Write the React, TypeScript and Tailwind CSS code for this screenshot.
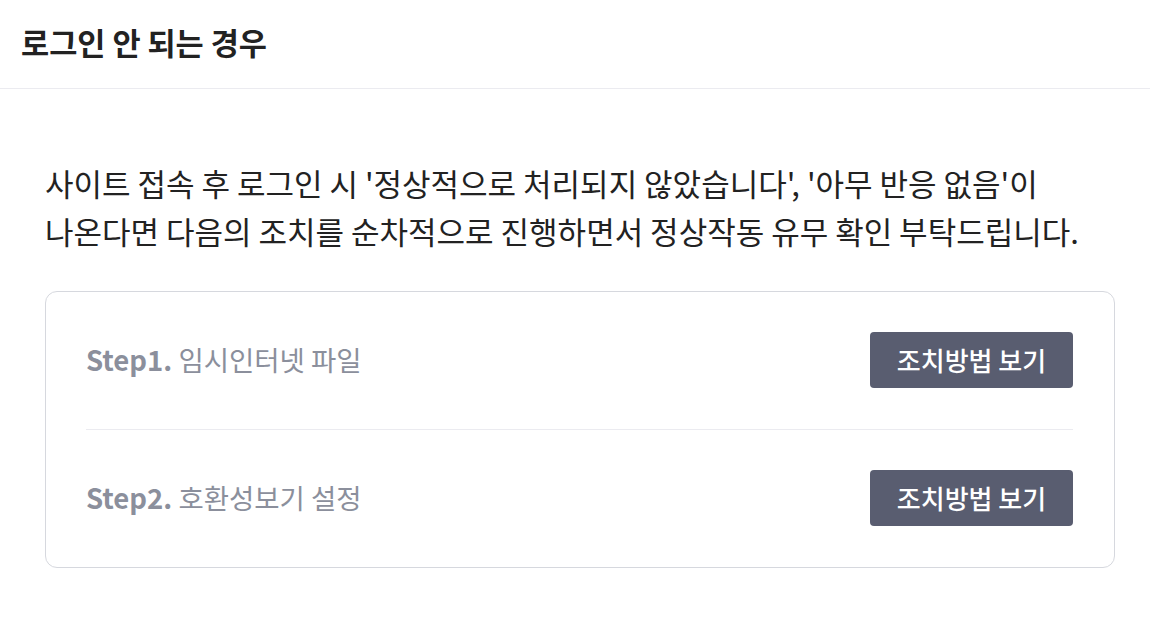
import React from "react";

const font = { fontFamily: '"Noto Sans CJK KR", "Noto Sans", sans-serif' };

function StepRow({ step, label }: { step: string; label: string }) {
  return (
    <div className="flex items-center justify-between pb-[41px] pt-[40px]">
      <div className="text-[27.5px] leading-none text-[#8b8f9c]">
        <span className="font-bold">{step}</span> <span>{label}</span>
      </div>
      <button className="h-[56px] w-[203px] rounded-[4px] bg-[#595d70] text-[26px] font-medium leading-none text-white">
        조치방법 보기
      </button>
    </div>
  );
}

export default function App() {
  return (
    <div className="min-h-[622px] w-[1150px] bg-white text-[#222]" style={font}>
      <header className="flex h-[89px] items-center border-b border-[#ebebf0] px-[21px]">
        <h1 className="pb-[4px] text-[30.6px] font-bold leading-none text-[#222]">
          로그인 안 되는 경우
        </h1>
      </header>
      <main className="pl-[45px] pt-[70px]">
        <p className="whitespace-nowrap text-[31px] leading-[48px] text-[#222]">
          사이트 접속 후 로그인 시 '정상적으로 처리되지 않았습니다', '아무 반응 없음'이
          <br />
          나온다면 다음의 조치를 순차적으로 진행하면서 정상작동 유무 확인 부탁드립니다.
        </p>
        <section className="mt-[36px] w-[1070px] rounded-[12px] border border-[#d6d8de] pl-[40px] pr-[41px]">
          <StepRow step="Step1." label="임시인터넷 파일" />
          <div className="h-px bg-[#ebebf0]" />
          <StepRow step="Step2." label="호환성보기 설정" />
        </section>
      </main>
    </div>
  );
}
